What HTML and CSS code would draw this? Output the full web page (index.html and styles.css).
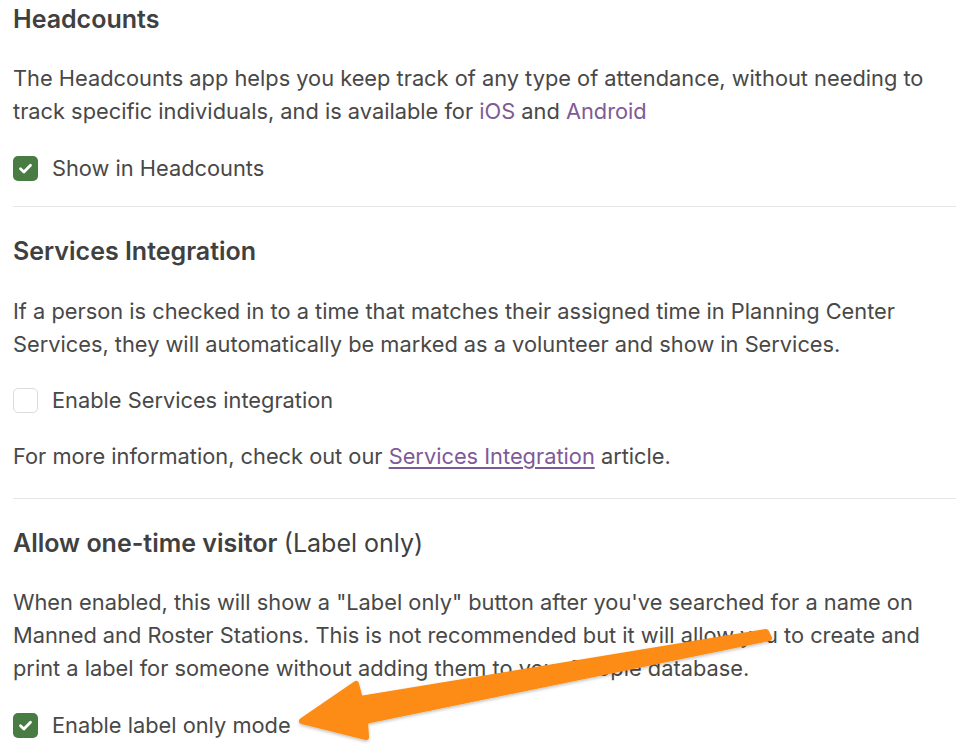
FILE: index.html
```html
<!DOCTYPE html>
<html>
<head>
<meta charset="utf-8">
<link rel="stylesheet" href="styles.css">
</head>
<body>
<main class="page">
  <section class="section first">
    <h2 class="title">Headcounts</h2>
    <p class="text">The Headcounts app helps you keep track of any type of attendance, without needing to track specific individuals, and is available for <a class="link" href="#">iOS</a> and <a class="link" href="#">Android</a></p>
    <label class="check-row"><span class="box checked"><svg viewBox="0 0 25 25" width="25" height="25"><path d="M7.5 12.8 L10.9 16 L17.5 9.2" fill="none" stroke="#fff" stroke-width="2.8" stroke-linecap="round" stroke-linejoin="round"/></svg></span>Show in Headcounts</label>
  </section>
  <section class="section second">
    <h2 class="title">Services Integration</h2>
    <p class="text">If a person is checked in to a time that matches their assigned time in Planning Center Services, they will automatically be marked as a volunteer and show in Services.</p>
    <label class="check-row"><span class="box"></span>Enable Services integration</label>
    <p class="text">For more information, check out our <a class="link underline" href="#">Services Integration</a> article.</p>
  </section>
  <section class="section third">
    <h2 class="title">Allow one-time visitor <span class="light">(Label only)</span></h2>
    <p class="text">When enabled, this will show a "Label only" button after you've searched for a name on Manned and Roster Stations. This is not recommended but it will allow you to create and print a label for someone without adding them to your People database.</p>
    <label class="check-row"><span class="box checked"><svg viewBox="0 0 25 25" width="25" height="25"><path d="M7.5 12.8 L10.9 16 L17.5 9.2" fill="none" stroke="#fff" stroke-width="2.8" stroke-linecap="round" stroke-linejoin="round"/></svg></span>Enable label only mode</label>
  </section>
</main>
<svg class="arrow" viewBox="0 0 956 756" width="956" height="756">
  <defs>
    <filter id="sh" x="-10%" y="-10%" width="120%" height="130%">
      <feDropShadow dx="0" dy="1.5" stdDeviation="1.5" flood-color="#000" flood-opacity="0.25"/>
    </filter>
  </defs>
  <path filter="url(#sh)" d="M302 721 L356 684 L360 699 L766 632 L769 638 L365 721 L366 737 Z" fill="#fd8c14" stroke="#fd8c14" stroke-width="6" stroke-linejoin="round"/>
</svg>
</body>
</html>
```
FILE: styles.css
```css
html, body {
  margin: 0;
  padding: 0;
  background: #ffffff;
}
body {
  width: 956px;
  height: 756px;
  overflow: hidden;
  position: relative;
  font-family: Inter, "Noto Sans", sans-serif;
  color: #484848;
}
.page {
  padding-left: 13px;
  padding-top: 1px;
}
.section {
  display: flex;
  flex-direction: column;
  gap: 24px;
  border-bottom: 1px solid #e6e6e6;
}
.section.first {
  padding-bottom: 21px;
}
.section.second {
  padding-top: 26px;
  padding-bottom: 25px;
  gap: 23px;
}
.section.second .title {
  margin-bottom: 3px;
}
.section.third {
  padding-top: 26px;
  gap: 24px;
  border-bottom: none;
}
.title {
  margin: 0 0 1px 0;
  font-size: 25px;
  line-height: 36px;
  font-weight: 600;
  color: #404040;
}
.light {
  font-weight: 400;
}
.text {
  margin: 0;
  font-size: 21.8px;
  line-height: 33px;
  padding-right: 12px;
}
.link {
  color: #7e5a99;
  text-decoration: none;
}
.link.underline {
  text-decoration: underline;
  text-decoration-thickness: 1.5px;
  text-underline-offset: 3px;
}
.check-row {
  display: flex;
  align-items: center;
  gap: 14px;
  font-size: 21.8px;
  line-height: 33px;
}
.box {
  width: 25px;
  height: 25px;
  box-sizing: border-box;
  border-radius: 5px;
  border: 1px solid #dcdcdc;
  background: #fff;
  display: flex;
}
.box.checked {
  background: #487c43;
  border: none;
}
.arrow {
  position: absolute;
  top: 0;
  left: 0;
  pointer-events: none;
}
```
